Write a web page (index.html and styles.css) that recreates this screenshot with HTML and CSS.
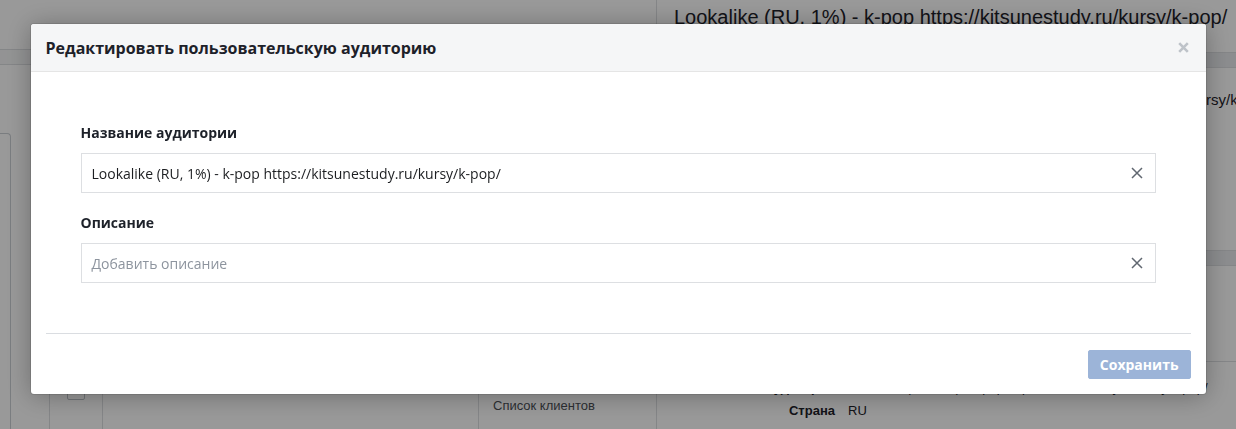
FILE: index.html
```html
<!DOCTYPE html>
<html lang="ru">
<head>
    <meta charset="UTF-8">
    <title>Редактировать пользовательскую аудиторию</title>
    <link rel="stylesheet" href="styles.css">
</head>
<body>
    <!-- Page sous la fenêtre -->
    <div class="page">
        <div class="left-pane">
            <div class="left-bar"></div>
            <div class="left-body">
                <div class="side-stub"></div>
                <div class="audience-table">
                    <div class="cell cell-check"><span class="checkbox"></span></div>
                    <div class="cell cell-name"></div>
                    <div class="cell cell-type">Список клиентов</div>
                </div>
            </div>
        </div>
        <div class="right-pane">
            <h2 class="pane-title">Lookalike (RU, 1%) - k-pop https://kitsunestudy.ru/kursy/k-pop/</h2>
            <div class="pane-band"></div>
            <div class="info-row top-row">
                <span class="info-label">Название аудитории</span>
                <span class="info-value">Lookalike (RU, 1%) - k-pop https://kitsunestudy.ru/kursy/k-pop/</span>
            </div>
            <div class="pane-band second-band"></div>
            <div class="details">
                <div class="info-row">
                    <span class="info-label">Название аудитории</span>
                    <span class="info-value">Lookalike (RU, 1%) - k-pop https://kitsunestudy.ru/kursy/k-pop/</span>
                </div>
                <div class="info-row">
                    <span class="info-label">Страна</span>
                    <span class="info-value">RU</span>
                </div>
            </div>
        </div>
    </div>

    <!-- Fenêtre modale -->
    <div class="overlay">
        <div class="modal">
            <div class="modal-head">
                <h1>Редактировать пользовательскую аудиторию</h1>
                <button class="modal-close" aria-label="Закрыть">
                    <svg width="11" height="11" viewBox="0 0 11 11"><path d="M1.2 1.2L9.8 9.8M9.8 1.2L1.2 9.8" stroke="#bec3c9" stroke-width="2.6"/></svg>
                </button>
            </div>
            <div class="modal-body">
                <div class="form">
                    <div class="field">
                        <label>Название аудитории</label>
                        <div class="input">
                            <span class="input-text">Lookalike (RU, 1%) - k-pop https://kitsunestudy.ru/kursy/k-pop/</span>
                            <svg class="clear" width="12" height="12" viewBox="0 0 12 12"><path d="M1 1L11 11M11 1L1 11" stroke="#606770" stroke-width="1.5"/></svg>
                        </div>
                    </div>
                    <div class="field">
                        <label>Описание</label>
                        <div class="input">
                            <span class="input-text placeholder">Добавить описание</span>
                            <svg class="clear" width="12" height="12" viewBox="0 0 12 12"><path d="M1 1L11 11M11 1L1 11" stroke="#606770" stroke-width="1.5"/></svg>
                        </div>
                    </div>
                </div>
            </div>
            <div class="modal-foot">
                <button class="save-btn" disabled>Сохранить</button>
            </div>
        </div>
    </div>
</body>
</html>
```

FILE: styles.css
```css
/* Reset basique */
* { margin: 0; padding: 0; box-sizing: border-box; }

body {
    font-family: 'Liberation Sans', Arial, sans-serif;
    color: #1d2129;
    background: #fff;
    width: 1236px;
    height: 429px;
    overflow: hidden;
}

/* Page en arrière-plan */
.page {
    display: flex;
    height: 429px;
}

.left-pane {
    width: 656px;
    display: flex;
    flex-direction: column;
}

.left-bar {
    margin-top: 49px;
    height: 16px;
    background: #f5f6f7;
    border-top: 1px solid #dddfe2;
    border-bottom: 1px solid #dddfe2;
}

.left-body {
    flex: 1;
    display: flex;
    margin-top: 68px;
}

.side-stub {
    width: 11px;
    border-top: 1px solid #ccd0d5;
    border-right: 1px solid #ccd0d5;
    border-top-right-radius: 4px;
}

.audience-table {
    margin-left: 38px;
    flex: 1;
    display: grid;
    grid-template-columns: 52px 376px 1fr;
    border-left: 1px solid #dddfe2;
}

.cell {
    display: flex;
    align-items: flex-end;
    padding-bottom: 16px;
}

.cell-check {
    justify-content: center;
    padding-bottom: 29px;
}

.checkbox {
    width: 18px;
    height: 18px;
    border: 1px solid #bec3c9;
    border-radius: 2px;
    background: #fff;
}

.cell-name {
    border-left: 1px solid #dddfe2;
}

.cell-type {
    border-left: 1px solid #dddfe2;
    padding-left: 14px;
    font-size: 13px;
    color: #4b4f56;
}

.right-pane {
    flex: 1;
    border-left: 1px solid #dddfe2;
    overflow: hidden;
    white-space: nowrap;
}

.pane-title {
    font-size: 20px;
    font-weight: normal;
    line-height: 24px;
    padding: 5px 0 0 17px;
    height: 52px;
    color: #1d2129;
}

.pane-band {
    height: 16px;
    background: #e9ebee;
    border-top: 1px solid #dddfe2;
    border-bottom: 1px solid #dddfe2;
}

.second-band {
    margin-top: 139px;
}

.info-row {
    display: grid;
    grid-template-columns: 178px 1fr;
    column-gap: 13px;
    font-size: 13px;
    line-height: 23px;
}

.top-row {
    margin-top: 20px;
    font-size: 15px;
}

.top-row .info-value {
    padding-left: 9px;
}

.info-label {
    font-weight: bold;
    text-align: right;
    color: #1d2129;
}

.details {
    margin-top: 95px;
    border-top: 1px solid #dddfe2;
    padding-top: 14px;
}

/* Voile et fenêtre modale */
.overlay {
    position: fixed;
    inset: 0;
    background: rgba(0, 0, 0, 0.4);
    display: flex;
    justify-content: center;
    align-items: flex-start;
    padding-top: 24px;
}

.modal {
    width: 1175px;
    background: #fff;
    border-radius: 3px;
    box-shadow: 0 2px 26px rgba(0, 0, 0, 0.3), 0 0 0 1px rgba(0, 0, 0, 0.1);
    font-family: 'Open Sans', 'Liberation Sans', sans-serif;
}

.modal-head {
    height: 48px;
    background: #f5f6f7;
    border-bottom: 1px solid #e5e5e5;
    border-radius: 3px 3px 0 0;
    display: flex;
    align-items: center;
    justify-content: space-between;
    padding: 0 17px 0 15px;
}

.modal-head h1 {
    font-size: 16px;
    font-weight: bold;
    color: #1d2129;
}

.modal-close {
    background: none;
    border: none;
    display: flex;
    cursor: pointer;
}

.modal-body {
    padding: 0 15px;
}

.form {
    padding: 52px 35px 50px;
    border-bottom: 1px solid #dadde1;
}

.field + .field {
    margin-top: 21px;
}

.field label {
    display: block;
    font-size: 14px;
    font-weight: bold;
    line-height: 18px;
    margin-bottom: 11px;
    color: #1d2129;
}

.input {
    height: 40px;
    border: 1px solid #dddfe2;
    display: flex;
    align-items: center;
    justify-content: space-between;
    padding: 0 12px 0 10px;
}

.input-text {
    font-size: 14px;
    color: #1c1e21;
}

.placeholder {
    color: #8d949e;
}

.modal-foot {
    display: flex;
    justify-content: flex-end;
    padding: 16px 15px 15px;
}

.save-btn {
    height: 29px;
    padding: 0 11px;
    background: #9cb4d8;
    border: 1px solid #9cb4d8;
    border-radius: 2px;
    color: #fff;
    font-family: inherit;
    font-size: 14px;
    font-weight: bold;
}
```
